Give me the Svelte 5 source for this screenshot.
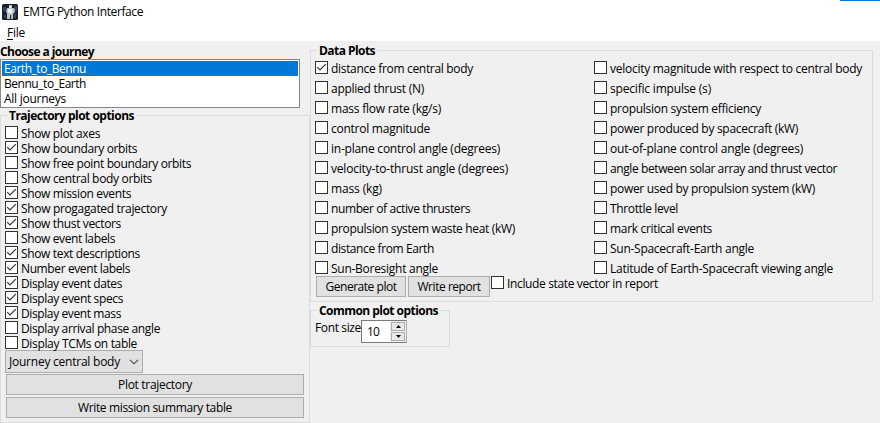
<script>
  const journeys = [
    ['Earth_to_Bennu', 82],
    ['Bennu_to_Earth', 82],
    ['All journeys', 62]
  ];
  let selected = $state(0);

  // [label, checked, label width]
  let trajectory = $state([
    ['Show plot axes', false, 79],
    ['Show boundary orbits', true, 116],
    ['Show free point boundary orbits', false, 170],
    ['Show central body orbits', false, 131],
    ['Show mission events', true, 110],
    ['Show progagated trajectory', true, 146],
    ['Show thust vectors', true, 100],
    ['Show event labels', false, 94],
    ['Show text descriptions', true, 119],
    ['Number event labels', true, 109],
    ['Display event dates', true, 101],
    ['Display event specs', true, 102],
    ['Display event mass', true, 100],
    ['Display arrival phase angle', false, 139],
    ['Display TCMs on table', false, 116]
  ]);

  let plots = $state([
    ['distance from central body', true, 142],
    ['velocity magnitude with respect to central body', false, 252],
    ['applied thrust (N)', false, 93],
    ['specific impulse (s)', false, 101],
    ['mass flow rate (kg/s)', false, 110],
    ['propulsion system efficiency', false, 151],
    ['control magnitude', false, 99],
    ['power produced by spacecraft (kW)', false, 188],
    ['in-plane control angle (degrees)', false, 169],
    ['out-of-plane control angle (degrees)', false, 193],
    ['velocity-to-thrust angle (degrees)', false, 177],
    ['angle between solar array and thrust vector', false, 227],
    ['mass (kg)', false, 51],
    ['power used by propulsion system (kW)', false, 205],
    ['number of active thrusters', false, 139],
    ['Throttle level', false, 68],
    ['propulsion system waste heat (kW)', false, 184],
    ['mark critical events', false, 102],
    ['distance from Earth', false, 103],
    ['Sun-Spacecraft-Earth angle', false, 144],
    ['Sun-Boresight angle', false, 107],
    ['Latitude of Earth-Spacecraft viewing angle', false, 223]
  ]);

  let report = $state([['Include state vector in report', false, 151]]);
  let size = $state(10);

  // Tracks a label so that it fills the given width
  function fit(node, width) {
    const natural = node.getBoundingClientRect().width;
    node.style.letterSpacing = (width - natural) / node.textContent.length + 'px';
  }
</script>

{#snippet check(item)}
  <button class="check" role="checkbox" aria-checked={item[1]} aria-label={item[0]} onclick={() => (item[1] = !item[1])}>
    <span class="box">
      {#if item[1]}
        <svg width="11" height="11" viewBox="0 0 11 11"><path d="M1.2 5.2 4 8 9.8 2.2" fill="none" stroke="#333" stroke-width="1.2" /></svg>
      {/if}
    </span>
    <span class="t" use:fit={item[2]}>{item[0]}</span>
  </button>
{/snippet}

<div class="window">
  <header>
    <svg width="16" height="16" viewBox="0 0 16 16">
      <rect width="16" height="16" rx="1.5" fill="#17202d" />
      <path d="M1 3h3v4H1zM12 2h3v5h-3zM2 11h2v3H2zM12 10h2v4h-2z" fill="#33445b" />
      <path d="M7 1h3v3h2l1 3-1 3-1-1v6H9v-4H8v4H5v-6L4 8l1-4h2z" fill="#bcc4c9" />
      <path d="M7 2h2v2H7zM6 5h4v4H6z" fill="#edf0f0" />
    </svg>
    <span class="t" use:fit={120}>EMTG Python Interface</span>
    <i class="accent"></i>
  </header>
  <nav><span class="t" use:fit={18}><u>F</u>ile</span></nav>

  <main>
    <section class="left">
      <h2><span class="t" use:fit={94}>Choose a journey</span></h2>
      <div class="list" role="listbox">
        {#each journeys as [name, w], i}
          <button class="row" class:selected={selected === i} role="option" aria-selected={selected === i} onclick={() => (selected = i)}>
            <span class="t" use:fit={w}>{name}</span>
          </button>
        {/each}
      </div>
      <fieldset class="traj">
        <legend><span class="t" use:fit={125}>Trajectory plot options</span></legend>
        {#each trajectory as item}{@render check(item)}{/each}
        <button class="combo">
          <span class="t" use:fit={111}>Journey central body</span>
          <svg width="10" height="6" viewBox="0 0 10 6"><path d="M1 .8 5 4.8 9 .8" fill="none" stroke="#444" stroke-width="1.1" /></svg>
        </button>
        <button class="btn"><span class="t" use:fit={74}>Plot trajectory</span></button>
        <button class="btn"><span class="t" use:fit={154}>Write mission summary table</span></button>
      </fieldset>
    </section>

    <section class="right">
      <fieldset class="data">
        <legend><span class="t" use:fit={56}>Data Plots</span></legend>
        <div class="grid">
          {#each plots as item}{@render check(item)}{/each}
        </div>
        <div class="actions">
          <button class="btn gen"><span class="t" use:fit={71}>Generate plot</span></button>
          <button class="btn wr"><span class="t" use:fit={63}>Write report</span></button>
          {@render check(report[0])}
        </div>
      </fieldset>
      <fieldset class="common">
        <legend><span class="t" use:fit={119}>Common plot options</span></legend>
        <div class="font">
          <span class="t label" use:fit={46}>Font size</span>
          <div class="spin">
            <span class="num">{size}</span>
            <div class="arrows">
              <button aria-label="Increase" onclick={() => size++}><svg width="5" height="3" viewBox="0 0 5 3"><path d="M0 3 2.5 0 5 3z" /></svg></button>
              <button aria-label="Decrease" onclick={() => size--}><svg width="5" height="3" viewBox="0 0 5 3"><path d="M0 0 2.5 3 5 0z" /></svg></button>
            </div>
          </div>
        </div>
      </fieldset>
    </section>
  </main>
</div>

<style>
  .window {
    width: 880px;
    height: 423px;
    overflow: hidden;
    background: #fff;
    color: #000;
    font: 12px/15px 'Open Sans', 'Noto Sans', sans-serif;
  }
  .window * { box-sizing: border-box; }
  button {
    font: inherit;
    color: inherit;
    margin: 0;
    padding: 0;
    border: 0;
    background: none;
    text-align: left;
  }
  .t { display: inline-block; white-space: pre; flex: none; }
  svg { display: block; flex: none; }
  header {
    height: 24px;
    display: flex;
    align-items: center;
    gap: 5px;
    padding: 0 0 1px 2px;
  }
  .accent {
    width: 40px;
    height: 1px;
    margin-left: auto;
    align-self: flex-start;
    background: #0078d7;
  }
  nav { height: 17px; padding: 1px 0 0 7px; }
  u { text-underline-offset: 2px; }
  main { display: flex; height: 382px; background: #f0f0f0; }
  .left { width: 310px; }
  h2 { margin: 0; height: 18px; padding-top: 3px; font: inherit; font-weight: 700; }
  .list {
    width: 300px;
    height: 49px;
    border: 1px solid #828790;
    padding: 1px;
    background: #fff;
  }
  .row { display: flex; width: 100%; height: 15px; padding-left: 2px; }
  .row.selected { background: #0078d7; color: #fff; }
  fieldset {
    position: relative;
    margin: 0;
    min-width: 0;
    border: 1px solid #dcdcdc;
    padding: 0;
  }
  legend {
    position: absolute;
    top: -8px;
    left: 6px;
    height: 15px;
    padding: 0 2px;
    background: #f0f0f0;
    font-weight: 700;
  }
  .traj { width: 310px; height: 308px; margin-top: 7px; padding: 9px 5px 0 4px; }
  .check { display: flex; align-items: flex-start; gap: 3px; height: 15px; padding-top: 1px; }
  .box {
    width: 13px;
    height: 13px;
    flex: none;
    border: 1px solid #333;
    background: #fff;
  }
  .combo {
    display: flex;
    align-items: center;
    justify-content: space-between;
    width: 138px;
    height: 23px;
    margin-bottom: 1px;
    padding: 0 3px;
    border: 1px solid #adadad;
    background: #e1e1e1;
  }
  .btn {
    display: flex;
    align-items: center;
    justify-content: center;
    width: 298px;
    height: 21px;
    margin: 0 0 2px 1px;
    border: 1px solid #adadad;
    background: #e1e1e1;
  }
  .data { width: 563px; height: 252px; margin-top: 9px; padding: 9px 0 0 4px; }
  .grid { display: grid; grid-template-columns: 279px 280px; grid-auto-rows: 20px; align-items: start; }
  .actions { display: flex; align-items: flex-start; margin-top: -4px; }
  .gen { width: 90px; }
  .wr { width: 82px; margin: 0 1px 0 2px; }
  .actions .check { margin-top: -1px; }
  .common { width: 140px; height: 37px; margin-top: 8px; padding: 9px 0 0 4px; }
  .font { display: flex; }
  .spin {
    display: flex;
    width: 46px;
    height: 23px;
    border: 1px solid #7a7a7a;
    border-right-color: #adadad;
    background: #fff;
  }
  .num { width: 28px; padding: 3px 0 0 5px; letter-spacing: -0.8px; }
  .arrows { display: flex; flex-direction: column; gap: 1px; width: 16px; padding: 1px; background: #f0f0f0; }
  .arrows button {
    display: flex;
    align-items: center;
    justify-content: center;
    height: 9px;
    border: 1px solid #adadad;
    background: #e8e8e8;
  }
</style>
